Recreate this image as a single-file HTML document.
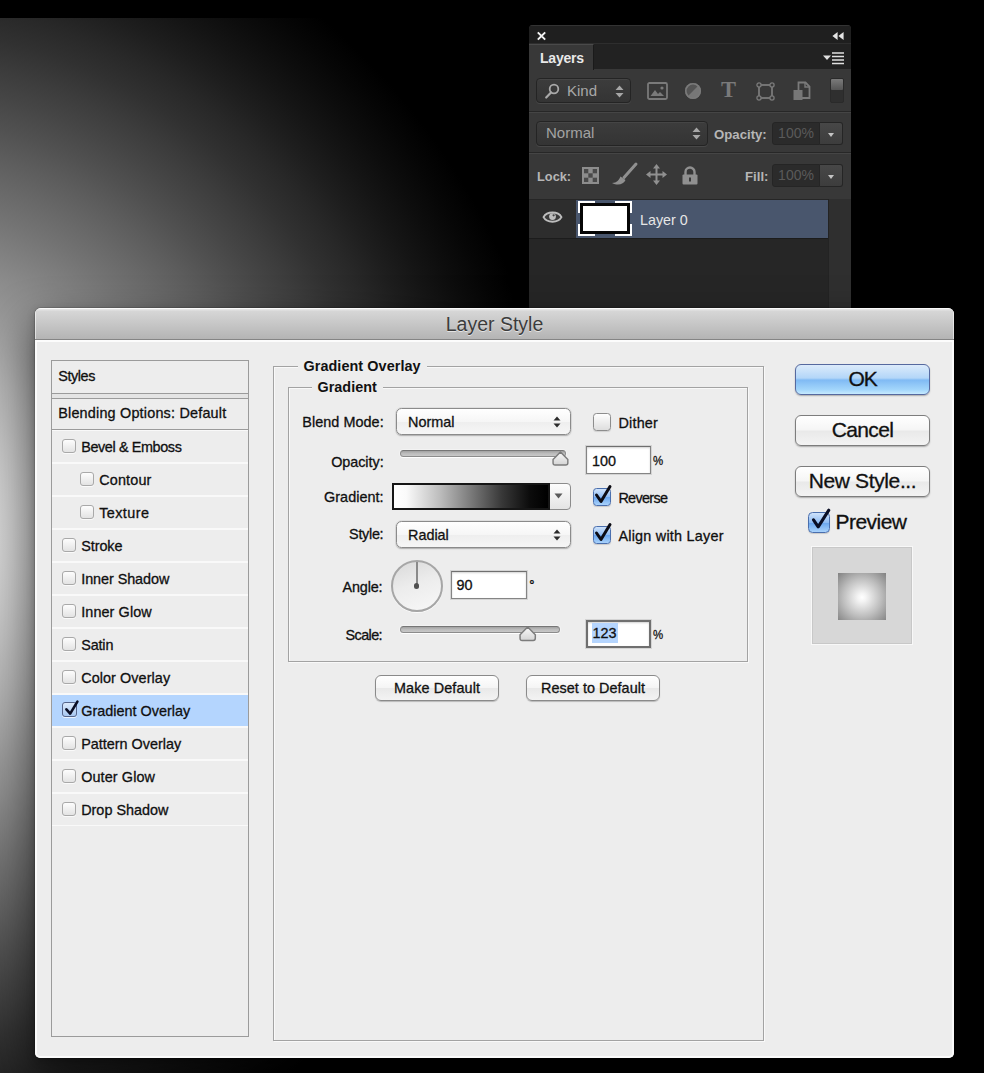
<!DOCTYPE html>
<html lang="en">
<head>
<meta charset="utf-8">
<title>Layer Style</title>
<style>
*{box-sizing:border-box;margin:0;padding:0}
html,body{width:984px;height:1073px;overflow:hidden;background:#000}
body{position:relative;font-family:"Liberation Sans",sans-serif;color:#111;-webkit-font-smoothing:antialiased}
.abs{position:absolute}
#canvas{position:absolute;left:0;top:18px;width:984px;height:1055px;
  background:radial-gradient(circle 682px at -119px 520px,#ffffff 0.0%,#f3f3f3 4.2%,#e8e8e8 8.3%,#dcdcdc 12.5%,#d1d1d1 16.7%,#c5c5c5 20.8%,#b9b9b9 25.0%,#aeaeae 29.2%,#a2a2a2 33.3%,#969696 37.5%,#8b8b8b 41.7%,#7f7f7f 45.8%,#737373 50.0%,#686868 54.2%,#5d5d5d 58.3%,#515151 62.5%,#464646 66.7%,#3c3c3c 70.8%,#313131 75.0%,#282828 79.2%,#1e1e1e 83.3%,#151515 87.5%,#0d0d0d 91.7%,#060606 95.8%,#000000 100.0%)}

/* ---------- Layers panel ---------- */
#lp{position:absolute;left:529px;top:25px;width:322px;height:290px;background:#383838;border-radius:4px 4px 0 0;overflow:hidden;
  font-family:"Liberation Sans",sans-serif;color:#d6d6d6}
#lp .bar{position:absolute;left:0;top:0;width:322px;height:18px;background:#1f1f1f;border-top:1px solid #333}
#lp .tabs{position:absolute;left:0;top:18px;width:322px;height:26px;background:#222;border-top:1px solid #2e2e2e}
#lp .tab{position:absolute;left:0;top:0;width:65px;height:26px;background:#383838;border-right:1px solid #1a1a1a;border-top:1px solid #4a4a4a;
  font-weight:bold;font-size:14px;line-height:26px;padding-left:11px;color:#e9e9e9;letter-spacing:-0.2px}
#lp .sep{position:absolute;left:0;width:322px;height:2px;background:#272727;border-bottom:1px solid #454545}
#lp .dd{position:absolute;border:1px solid #242424;border-radius:4px;background:linear-gradient(#3c3c3c,#343434);box-shadow:0 1px 0 #484848, inset 0 1px 0 #454545}
#lp .lbl{position:absolute;font-weight:bold;font-size:13.2px;color:#b6b6b6;line-height:16px;white-space:nowrap}
#lp .fld{position:absolute;height:23px;background:#2b2b2b;border:1px solid #252525;border-radius:3px 0 0 3px;color:#5a5a5a;font-size:14px;line-height:21px;text-align:center}
#lp .fbtn{position:absolute;height:23px;width:23px;background:linear-gradient(#474747,#3d3d3d);border:1px solid #252525;border-left:none;border-radius:0 3px 3px 0}
#lp .fbtn:after{content:"";position:absolute;left:7.5px;top:9.5px;border:3.5px solid transparent;border-top:4px solid #c4c4c4;border-bottom:none}
#lp svg{position:absolute;overflow:visible}

/* ---------- Dialog ---------- */
#dlg{position:absolute;left:35px;top:308px;width:919px;height:750px;background:#ededed;border-radius:6px 6px 5px 5px;overflow:hidden;
  box-shadow:0 20px 42px 3px rgba(0,0,0,.5),0 3px 9px rgba(0,0,0,.22),0 0 0 1px rgba(0,0,0,.12)}
#dlg .title{position:absolute;left:0;top:0;width:919px;height:32px;background:linear-gradient(#e9e9e9 0,#d6d6d6 8%,#b4b4b4 100%);border-top:1px solid #fafafa;border-bottom:1px solid #858585;box-shadow:inset 1px 0 0 rgba(255,255,255,.55),inset -1px 0 0 rgba(255,255,255,.55);
  text-align:center;font-size:19.5px;line-height:31px;color:#3c3c3c;text-shadow:0 1px 0 rgba(255,255,255,.6)}
#dlg .edge{position:absolute;left:0;top:32px;width:919px;height:718px;border:2px solid #fbfbfb;border-top:2px solid #fcfcfc;border-radius:0 0 5px 5px;pointer-events:none}
.t{position:absolute;white-space:nowrap;font-size:14.4px;line-height:18px;color:#101010;-webkit-text-stroke:.3px #101010}
.b{font-weight:bold}
.r{text-align:right}

/* sidebar */
#sb{position:absolute;left:16px;top:52px;width:198px;height:677px;border:1px solid #9b9b9b;background:#ededed}
#sb .row{position:absolute;left:0;width:196px;height:33px;border-top:1px solid #f9f9f9;border-bottom:1px solid #f9f9f9}
#sb .hd{position:absolute;left:0;width:196px}
.cb{position:absolute;width:14px;height:14px;border:1px solid #a9a9a9;border-radius:3px;background:linear-gradient(#fdfdfd,#e3e3e3);box-shadow:0 1px 0 rgba(255,255,255,.7)}
.cbx{position:absolute;width:18px;height:18px;border:1px solid #8d8d8d;border-radius:3.5px;background:linear-gradient(#fefefe,#dedede);box-shadow:0 1px 1px rgba(0,0,0,.12)}
.cbb{position:absolute;width:18px;height:18px;border:1px solid #4a6fae;border-radius:3.5px;background:linear-gradient(#cfe3fb,#8fbcf3 50%,#6aa6ee 52%,#a9d2fb);box-shadow:0 1px 1px rgba(0,0,0,.15)}
.fs{position:absolute;border:1px solid #a3a3a3;box-shadow:inset 1px 1px 0 rgba(255,255,255,.65),1px 1px 0 rgba(255,255,255,.65)}
.leg{position:absolute;background:#ededed;font-weight:bold;font-size:14.4px;line-height:18px;color:#111;white-space:nowrap;padding:0 6px}
.sel{-webkit-text-stroke:.3px #111;position:absolute;height:27px;border:1px solid #8b8b8b;border-radius:5.5px;background:linear-gradient(#ffffff,#f6f6f6 50%,#eeeeee 51%,#f6f6f6);box-shadow:0 1px 1.5px rgba(0,0,0,.22),0 0 0 1px rgba(0,0,0,.06);font-size:14.4px;line-height:26px;padding-left:11px;color:#111}
.sel svg{position:absolute;right:8.6px;top:7px}
.inp{-webkit-text-stroke:.3px #111;position:absolute;background:#fff;border:1px solid #858585;border-top-color:#6f6f6f;box-shadow:inset 0 1px 2px rgba(0,0,0,.18), 0 0 0 1px rgba(0,0,0,.10);font-size:14.4px;line-height:22px;padding-left:5px;color:#111}
.trk{position:absolute;height:7px;border-radius:3.5px;background:linear-gradient(#a2a2a2,#bcbcbc 50%,#c8c8c8);border:1px solid #8c8c8c;border-top-color:#767676;box-shadow:0 1px 0 rgba(255,255,255,.9),0 0 0 1px rgba(255,255,255,.35)}
.btn{-webkit-text-stroke:.3px #111;position:absolute;border:1px solid #8a8a8a;border-radius:6px;background:linear-gradient(#ffffff,#f5f5f5 48%,#e9e9e9 52%,#f3f3f3);box-shadow:0 1px 1px rgba(0,0,0,.22);text-align:center;color:#111;white-space:nowrap}
.btn.big{width:135px;height:31px;font-size:21px;line-height:28px;border-radius:6px;border-color:#7d7d7d;box-shadow:0 1px 1.5px rgba(0,0,0,.28)}
</style>
</head>
<body>
<div id="canvas"></div>

<!-- LAYERS PANEL -->
<div id="lp">
  <div class="bar"></div>
  <div class="tabs"><div class="tab">Layers</div></div>

  <!-- close X and collapse -->
  <svg style="left:8px;top:6.5px" width="9" height="8" viewBox="0 0 9 8"><path d="M0.8 0.4 L8.2 7.6 M8.2 0.4 L0.8 7.6" stroke="#f0f0f0" stroke-width="2" fill="none"/></svg>
  <svg style="left:302.5px;top:6.5px" width="12" height="8" viewBox="0 0 12 8"><path d="M5.6 0 L5.6 8 L0.4 4 Z M11.6 0 L11.6 8 L6.4 4 Z" fill="#e4e4e4"/></svg>
  <!-- panel menu -->
  <svg style="left:294px;top:27px" width="22" height="13" viewBox="0 0 22 13"><path d="M0 3.5 L8 3.5 L4 8 Z" fill="#e0e0e0"/><path d="M9 1 H21 M9 4.5 H21 M9 8 H21 M9 11.5 H21" stroke="#e0e0e0" stroke-width="1.6"/></svg>

  <!-- row 1: Kind filter -->
  <div class="dd" style="left:7px;top:53px;width:95px;height:25px"></div>
  <svg style="left:16px;top:58px" width="15" height="16" viewBox="0 0 15 16"><circle cx="9" cy="6" r="4.3" fill="none" stroke="#a9a9a9" stroke-width="1.8"/><path d="M6 9.5 L1.2 14.5" stroke="#a9a9a9" stroke-width="2.2" stroke-linecap="round"/></svg>
  <div class="lbl" style="left:38px;top:58px;font-weight:normal;font-size:15px;color:#a8a8a8;letter-spacing:0px">Kind</div>
  <svg style="left:86px;top:60px" width="9" height="13" viewBox="0 0 9 13"><path d="M0.5 5 L8.5 5 L4.5 0.5 Z M0.5 8 L8.5 8 L4.5 12.5 Z" fill="#a6a6a6"/></svg>
  <!-- filter icons -->
  <svg style="left:118px;top:57px" width="21" height="18" viewBox="0 0 21 18"><rect x="1" y="1" width="19" height="16" rx="1.5" fill="none" stroke="#7a7a7a" stroke-width="1.8"/><path d="M3.5 14 L8 8 L11 12 L13 10 L17 14 Z" fill="#7a7a7a"/><circle cx="15" cy="6" r="1.6" fill="#7a7a7a"/></svg>
  <svg style="left:155px;top:57px" width="18" height="18" viewBox="0 0 18 18"><circle cx="9" cy="9" r="8" fill="#777777"/><path d="M3.3 14.7 A8 8 0 0 1 14.7 3.3 Z" fill="#555"/><circle cx="9" cy="9" r="7.2" fill="none" stroke="#7a7a7a" stroke-width="1.6"/></svg>
  <div class="lbl" style="left:192px;top:50px;font-family:'Liberation Serif',serif;font-weight:bold;font-size:22.5px;line-height:30px;color:#7a7a7a">T</div>
  <svg style="left:227px;top:57px" width="19" height="19" viewBox="0 0 19 19"><rect x="3" y="3" width="13" height="13" fill="none" stroke="#7a7a7a" stroke-width="1.8"/><g fill="#3a3a3a" stroke="#7a7a7a" stroke-width="1.3"><circle cx="3" cy="3" r="2.1"/><circle cx="16" cy="3" r="2.1"/><circle cx="3" cy="16" r="2.1"/><circle cx="16" cy="16" r="2.1"/></g></svg>
  <svg style="left:264px;top:56px" width="18" height="20" viewBox="0 0 18 20"><path d="M5.5 9 V1.5 H12.5 L16.5 5.5 V17 H9" fill="none" stroke="#7a7a7a" stroke-width="1.8"/><path d="M12 1.5 V6 H16.5" fill="none" stroke="#7a7a7a" stroke-width="1.4"/><rect x="0.5" y="9" width="9" height="10" fill="#777777"/></svg>
  <!-- toggle -->
  <div class="abs" style="left:301px;top:53px;width:14px;height:25px;background:#2f2f2f;border:1px solid #2a2a2a;border-radius:2px"></div>
  <div class="abs" style="left:302px;top:54px;width:12px;height:11px;background:linear-gradient(#7a7a7a,#555);border-radius:1px"></div>

  <div class="sep" style="top:86px"></div>

  <!-- row 2: blend/opacity -->
  <div class="dd" style="left:7px;top:96px;width:172px;height:25px"></div>
  <div class="lbl" style="left:17px;top:100px;font-weight:normal;font-size:15px;color:#a3a3a3">Normal</div>
  <svg style="left:163px;top:102px" width="9" height="13" viewBox="0 0 9 13"><path d="M0.5 5 L8.5 5 L4.5 0.5 Z M0.5 8 L8.5 8 L4.5 12.5 Z" fill="#a6a6a6"/></svg>
  <div class="lbl" style="left:185px;top:102px">Opacity:</div>
  <div class="fld" style="left:243px;top:97px;width:48px">100%</div>
  <div class="fbtn" style="left:291px;top:97px"></div>

  <div class="sep" style="top:127px"></div>

  <!-- row 3: lock/fill -->
  <div class="lbl" style="left:8px;top:144px;font-size:12.8px">Lock:</div>
  <svg style="left:53px;top:142px" width="17" height="17" viewBox="0 0 17 17"><rect x="0" y="0" width="17" height="17" fill="#8d8d8d"/><g fill="#4a4a4a"><rect x="2" y="2" width="4.3" height="4.3"/><rect x="10.7" y="2" width="4.3" height="4.3"/><rect x="6.3" y="6.3" width="4.4" height="4.4"/><rect x="2" y="10.7" width="4.3" height="4.3"/><rect x="10.7" y="10.7" width="4.3" height="4.3"/></g></svg>
  <svg style="left:82px;top:138px" width="27" height="23" viewBox="0 0 27 23"><path d="M25 1 L13 14.5" stroke="#909090" stroke-width="3" stroke-linecap="round"/><path d="M1 20 C6 20 8 17 9.5 13.5 L14.5 17 C12.5 21.5 7 23 1 20 Z" fill="#909090"/></svg>
  <svg style="left:117px;top:139px" width="21" height="21" viewBox="0 0 21 21"><path d="M10.5 0 L14 4.5 H11.5 V9.5 H16.5 V7 L21 10.5 L16.5 14 V11.5 H11.5 V16.5 H14 L10.5 21 L7 16.5 H9.5 V11.5 H4.5 V14 L0 10.5 L4.5 7 V9.5 H9.5 V4.5 H7 Z" fill="#909090"/></svg>
  <svg style="left:153px;top:141px" width="16" height="19" viewBox="0 0 16 19"><path d="M3.5 9 V6 A4.5 4.5 0 0 1 12.5 6 V9" fill="none" stroke="#909090" stroke-width="2.4"/><rect x="0.5" y="8.5" width="15" height="10" rx="1" fill="#909090"/><rect x="7" y="11.5" width="2" height="4" fill="#3a3a3a"/></svg>
  <div class="lbl" style="left:216px;top:144px">Fill:</div>
  <div class="fld" style="left:243px;top:139px;width:48px">100%</div>
  <div class="fbtn" style="left:291px;top:139px"></div>

  <!-- layer list -->
  <div class="abs" style="left:0;top:174px;width:322px;height:116px;background:#262626"></div>
  <div class="abs" style="left:299px;top:174px;width:23px;height:116px;background:#2f2f2f;border-left:1px solid #232323"></div>
  <div class="abs" style="left:0;top:175px;width:47px;height:38px;background:#2d2d2d"></div>
  <div class="abs" style="left:47px;top:175px;width:252px;height:38px;background:#49566d"></div>
  <div class="abs" style="left:0;top:213px;width:299px;height:1px;background:#1c1c1c"></div>
  <!-- eye -->
  <svg style="left:14px;top:184.5px" width="19" height="14.2" viewBox="0 0 20 15"><path d="M0.5 7.5 C4 1 16 1 19.5 7.5 C16 14 4 14 0.5 7.5 Z" fill="#3a3a3a" stroke="#bdbdbd" stroke-width="2"/><circle cx="10" cy="7" r="3.6" fill="#bdbdbd"/><circle cx="11.2" cy="5.6" r="1.2" fill="#444"/></svg>
  <!-- thumbnail -->
  <div class="abs" style="left:49px;top:176px;width:54px;height:35px;background:#fff"></div>
  <div class="abs" style="left:66px;top:176px;width:20px;height:35px;background:#49566d"></div>
  <div class="abs" style="left:49px;top:188px;width:54px;height:11px;background:#49566d"></div>
  <div class="abs" style="left:51px;top:178px;width:50px;height:31px;background:#fff;border:3px solid #060606"></div>
  <div class="lbl" style="left:111px;top:187px;font-weight:normal;font-size:14.3px;color:#e6e6e6">Layer 0</div>

</div>

<!-- DIALOG -->
<div id="dlg">
  <div class="title">Layer Style</div>
  <div id="sb">
    <div class="hd" style="top:0;height:33px;border-bottom:1px solid #9b9b9b"></div>
    <div class="hd" style="top:33px;height:4px;background:#e4e4e4"></div>
    <div class="hd" style="top:37px;height:32px;border-top:1px solid #9b9b9b;border-bottom:1px solid #9b9b9b"></div>
    <div class="t" style="left:6.2px;top:6.2px;letter-spacing:-0.4px">Styles</div>
    <div class="t" style="left:6.2px;top:42.5px;letter-spacing:0.2px">Blending Options: Default</div>
    <div class="row" style="top:69px"></div>
    <div class="cb" style="left:10px;top:78px"></div>
    <div class="t" style="left:29.2px;top:76.7px;letter-spacing:-0.38px">Bevel &amp; Emboss</div>
    <div class="row" style="top:102px"></div>
    <div class="cb" style="left:28px;top:111px"></div>
    <div class="t" style="left:47.2px;top:109.7px;letter-spacing:0.17px">Contour</div>
    <div class="row" style="top:135px"></div>
    <div class="cb" style="left:28px;top:144px"></div>
    <div class="t" style="left:47.2px;top:142.7px;letter-spacing:0.43px">Texture</div>
    <div class="row" style="top:168px"></div>
    <div class="cb" style="left:10px;top:177px"></div>
    <div class="t" style="left:29.2px;top:175.7px;letter-spacing:-0.06px">Stroke</div>
    <div class="row" style="top:201px"></div>
    <div class="cb" style="left:10px;top:210px"></div>
    <div class="t" style="left:29.2px;top:208.7px;letter-spacing:-0.06px">Inner Shadow</div>
    <div class="row" style="top:234px"></div>
    <div class="cb" style="left:10px;top:243px"></div>
    <div class="t" style="left:29.2px;top:241.7px;letter-spacing:0.1px">Inner Glow</div>
    <div class="row" style="top:267px"></div>
    <div class="cb" style="left:10px;top:276px"></div>
    <div class="t" style="left:29.2px;top:274.7px;letter-spacing:-0.15px">Satin</div>
    <div class="row" style="top:300px"></div>
    <div class="cb" style="left:10px;top:309px"></div>
    <div class="t" style="left:29.2px;top:307.7px;letter-spacing:0.08px">Color Overlay</div>
    <div class="row" style="top:333px;background:#b4d5fe"></div>
    <div class="cb" style="left:9.7px;top:341.2px;width:15px;height:15px;border-color:#56658a;background:linear-gradient(#dbe9fb,#a8c8f1)"></div>
    <svg class="abs" style="left:11.6px;top:337px;overflow:visible" width="17" height="19" viewBox="0 0 17 19"><path d="M2.4 11.3 L6.2 15.6 L13.4 3.6" fill="none" stroke="#0a0e24" stroke-width="2.6" stroke-linecap="round" stroke-linejoin="round"/></svg>
    <div class="t" style="left:29.2px;top:340.7px;letter-spacing:0.01px">Gradient Overlay</div>
    <div class="row" style="top:366px"></div>
    <div class="cb" style="left:10px;top:375px"></div>
    <div class="t" style="left:29.2px;top:373.7px;letter-spacing:0.0px">Pattern Overlay</div>
    <div class="row" style="top:399px"></div>
    <div class="cb" style="left:10px;top:408px"></div>
    <div class="t" style="left:29.2px;top:406.7px;letter-spacing:0.11px">Outer Glow</div>
    <div class="row" style="top:432px"></div>
    <div class="cb" style="left:10px;top:441px"></div>
    <div class="t" style="left:29.2px;top:439.7px;letter-spacing:-0.0px">Drop Shadow</div>
  </div>
  <div class="fs" style="left:238px;top:58px;width:491px;height:675px"></div>
  <div class="leg" style="left:262.5px;top:48.5px;letter-spacing:0.07px">Gradient Overlay</div>
  <div class="fs" style="left:253px;top:79px;width:460px;height:275px"></div>
  <div class="leg" style="left:276.5px;top:70px;letter-spacing:0.02px">Gradient</div>
  <div class="t r" style="left:208.7px;width:140px;top:105px;letter-spacing:0.05px;">Blend Mode:</div>
  <div class="t r" style="left:208.6px;width:140px;top:145px;letter-spacing:-0.04px;">Opacity:</div>
  <div class="t r" style="left:208.6px;width:140px;top:180px;letter-spacing:0.04px;">Gradient:</div>
  <div class="t r" style="left:208.3px;width:140px;top:217px;letter-spacing:-0.3px;">Style:</div>
  <div class="t r" style="left:207.4px;width:140px;top:270px;letter-spacing:-0.16px;">Angle:</div>
  <div class="t r" style="left:207.0px;width:140px;top:318px;letter-spacing:-0.6px;">Scale:</div>
  <div class="sel" style="left:361px;top:99.5px;width:175px">Normal<svg width="8" height="12" viewBox="0 0 8 12"><path d="M0.5 4.6 L7.5 4.6 L4 0.6 Z M0.5 7.4 L7.5 7.4 L4 11.4 Z" fill="#2b2b2b"/></svg></div>
  <div class="cbx" style="left:557.6px;top:105px"></div>
  <div class="t" style="left:583.4px;top:106px;letter-spacing:0.22px;">Dither</div>
  <div class="trk" style="left:365px;top:142px;width:166px"></div>
  <svg class="abs" style="left:516.6px;top:143px;overflow:visible" width="17.5" height="15.4" viewBox="0 0 17 15"><defs><linearGradient id="tg" x1="0" y1="0" x2="0" y2="1"><stop offset="0" stop-color="#fafafa"/><stop offset="1" stop-color="#d4d4d4"/></linearGradient></defs><path d="M8.2 0.9 L15.4 8.2 L15.4 11.6 Q15.4 13.6 13.4 13.6 L3 13.6 Q1 13.6 1 11.6 L1 8.2 Z" fill="url(#tg)" stroke="#7c7c7c" stroke-width="1.4" stroke-linejoin="round"/></svg>
  <div class="inp" style="left:551px;top:138px;width:65px;height:28px;line-height:28px">100</div>
  <div class="t" style="left:618.3px;top:144px;font-size:13.6px;transform:scaleX(.84);transform-origin:0 0;">%</div>
  <div class="abs" style="left:357px;top:174.5px;width:178.5px;height:27px;border:1px solid #8c8c8c;background:linear-gradient(#fdfdfd,#e4e4e4);border-radius:0 4px 4px 0"></div>
  <div class="abs" style="left:357px;top:174.5px;width:157.5px;height:27px;border:2px solid #161616;background:linear-gradient(90deg,#fff 0%,#fafafa 8%,#bcbcbc 30%,#7a7a7a 50%,#383838 70%,#0c0c0c 88%,#000 100%)"></div>
  <svg class="abs" style="left:518.5px;top:184.6px" width="9" height="6" viewBox="0 0 9 6"><path d="M0.5 0.5 L8.5 0.5 L4.5 5.5 Z" fill="#5a5a5a"/></svg>
  <div class="cbb" style="left:557.6px;top:180px"></div>
  <svg class="abs" style="left:557.5px;top:176px;overflow:visible" width="20" height="21" viewBox="0 0 20 21"><path d="M3.5 11 L8 17.5 L17 2.5" fill="none" stroke="#0c0c14" stroke-width="3" stroke-linecap="round" stroke-linejoin="round"/></svg>
  <div class="t" style="left:583.4px;top:181px;letter-spacing:-0.68px;">Reverse</div>
  <div class="sel" style="left:361px;top:212.5px;width:175px">Radial<svg width="8" height="12" viewBox="0 0 8 12"><path d="M0.5 4.6 L7.5 4.6 L4 0.6 Z M0.5 7.4 L7.5 7.4 L4 11.4 Z" fill="#2b2b2b"/></svg></div>
  <div class="cbb" style="left:557.6px;top:217.5px"></div>
  <svg class="abs" style="left:557.5px;top:213.5px;overflow:visible" width="20" height="21" viewBox="0 0 20 21"><path d="M3.5 11 L8 17.5 L17 2.5" fill="none" stroke="#0c0c14" stroke-width="3" stroke-linecap="round" stroke-linejoin="round"/></svg>
  <div class="t" style="left:583.4px;top:218.5px;letter-spacing:0.23px;">Align with Layer</div>
  <div class="abs" style="left:356px;top:252px;width:52px;height:52px;border-radius:50%;border:2px solid #a6a6a6;background:linear-gradient(160deg,#d9d9d9 0%,#ececec 45%,#f8f8f8 100%);box-shadow:0 1px 0 rgba(255,255,255,.8)"></div>
  <div class="abs" style="left:380.7px;top:254px;width:2px;height:22px;background:#8a8a8a"></div>
  <div class="abs" style="left:379px;top:275.3px;width:5.4px;height:5.4px;border-radius:50%;background:#505050"></div>
  <div class="inp" style="left:415.5px;top:263px;width:76px;height:28px;line-height:27.5px">90</div>
  <div class="t" style="left:494.5px;top:268px;font-size:12px;font-weight:bold;">°</div>
  <div class="trk" style="left:365px;top:317.7px;width:160px"></div>
  <svg class="abs" style="left:483.6px;top:318.3px;overflow:visible" width="18" height="16" viewBox="0 0 17 15"><defs><linearGradient id="tg2" x1="0" y1="0" x2="0" y2="1"><stop offset="0" stop-color="#fafafa"/><stop offset="1" stop-color="#d4d4d4"/></linearGradient></defs><path d="M8.2 0.9 L15.4 8.2 L15.4 11.6 Q15.4 13.6 13.4 13.6 L3 13.6 Q1 13.6 1 11.6 L1 8.2 Z" fill="url(#tg2)" stroke="#7c7c7c" stroke-width="1.4" stroke-linejoin="round"/></svg>
  <div class="inp" style="left:550.5px;top:311.5px;width:65px;height:28px;border:2px solid #6f6f6f;line-height:23px;padding-left:4px"><span style="background:#b5d5fe;padding:2px 1px 2px 1px">123</span></div>
  <div class="t" style="left:618.3px;top:317.5px;font-size:13.6px;transform:scaleX(.84);transform-origin:0 0;">%</div>
  <div class="btn" style="left:340px;top:367px;width:124px;height:26px;font-size:14.4px;line-height:25px;letter-spacing:0.11px">Make Default</div>
  <div class="btn" style="left:491px;top:367px;width:134px;height:26px;font-size:14.4px;line-height:25px;letter-spacing:0.05px">Reset to Default</div>
  <div class="btn big" style="left:760px;top:56px;letter-spacing:-1.2px;padding-left:0px;border-color:#56699f;background:linear-gradient(#dcebfb 0%,#b3d6f8 45%,#80baf4 52%,#a3d6fb 85%,#c6eaff 100%)">OK</div>
  <div class="btn big" style="left:760px;top:107px;letter-spacing:-0.68px;padding-left:0px;">Cancel</div>
  <div class="btn big" style="left:760px;top:158px;letter-spacing:-0.37px;padding-left:0px;">New Style...</div>
  <div class="cbb" style="left:773.4px;top:203.6px;width:21.5px;height:21.5px;border-radius:4.5px"></div>
  <svg class="abs" style="left:773px;top:198px;overflow:visible" width="24" height="26" viewBox="0 0 24 26"><path d="M5.5 13.8 L10.2 20.8 L20.8 4.2" fill="none" stroke="#0a0e24" stroke-width="3.1" stroke-linecap="round" stroke-linejoin="round"/></svg>
  <div class="t" style="left:800.5px;top:201.5px;font-size:21px;letter-spacing:-0.53px;line-height:24px;">Preview</div>
  <div class="abs" style="left:777px;top:239px;width:100px;height:97px;background:#d7d7d7;border:1px solid #c8c8c8;box-shadow:0 0 0 1px rgba(255,255,255,.6)"></div>
  <div class="abs" style="left:803px;top:264.5px;width:47.5px;height:47px;background:radial-gradient(circle 35px at 50% 52%,#fff 0%,#f4f4f4 12%,#bdbdbd 55%,#7e7e7e 100%)"></div>
  <div class="edge"></div>
</div>
</body>
</html>
